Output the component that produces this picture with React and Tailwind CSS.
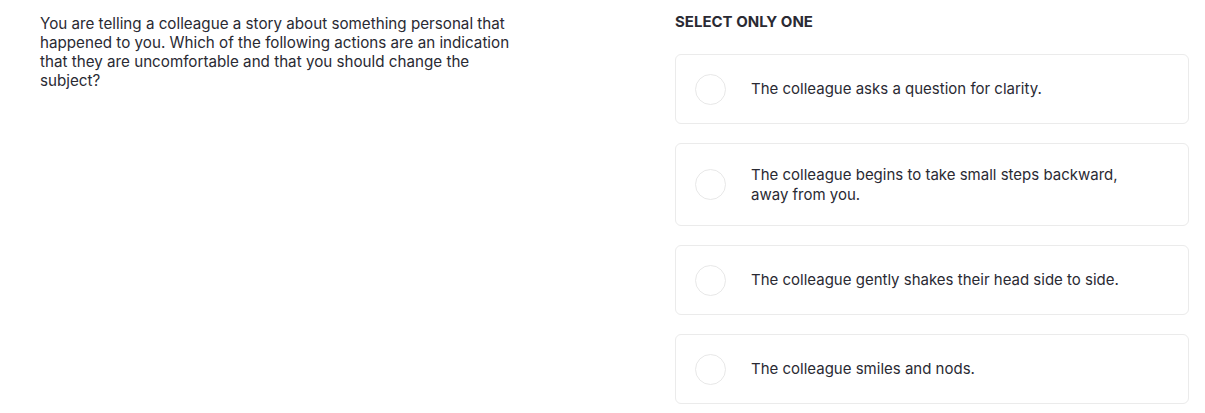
const options = [
  "The colleague asks a question for clarity.",
  "The colleague begins to take small steps backward, away from you.",
  "The colleague gently shakes their head side to side.",
  "The colleague smiles and nods.",
];

const Option = ({ text }) => {
  return (
    <div className="flex items-center py-[18.5px] pl-[19px] pr-[48px] bg-white border border-[#ebebeb] rounded-[6px]">
      <div className="shrink-0 w-[31px] h-[31px] rounded-full border-[1.5px] border-[#e8e8e8]" />
      <p className="ml-[25px] py-[2px] text-[15px] leading-[20px] text-[#2a2a33]">{text}</p>
    </div>
  );
};

export default function App() {
  return (
    <div
      className="w-[1205px] h-[413px] bg-white flex pl-[40px] pr-[16px] pt-[12px]"
      style={{ fontFamily: "Inter, 'Noto Sans', sans-serif" }}
    >
      <div className="flex-1">
        <p className="max-w-[490px] pt-[2px] text-[15.2px] leading-[19px] text-[#2a2a33]">
          You are telling a colleague a story about something personal that happened to you. Which of the
          following actions are an indication that they are uncomfortable and that you should change the
          subject?
        </p>
      </div>
      <div className="w-[514px]">
        <h2 className="text-[15px] leading-[20px] font-bold text-[#2a2a33] uppercase">Select only one</h2>
        <div className="mt-[22px] flex flex-col gap-[19px]">
          {options.map((opt, i) => (
            <Option key={i} text={opt} />
          ))}
        </div>
      </div>
    </div>
  );
}
